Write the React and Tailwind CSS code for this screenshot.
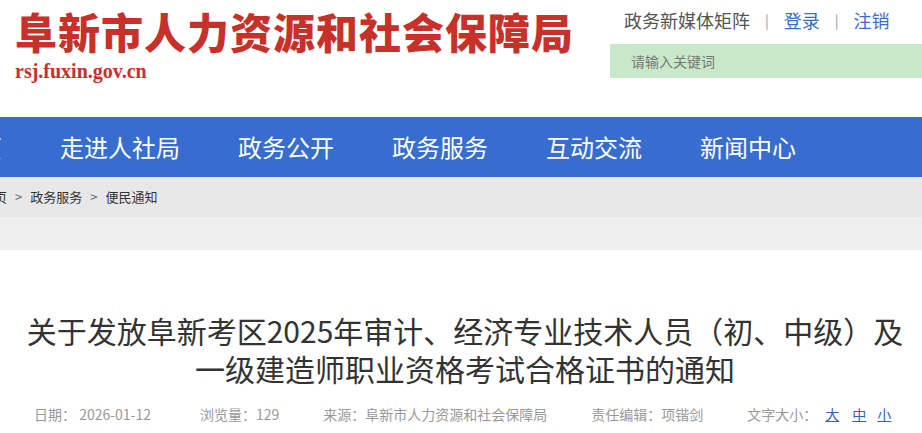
import React from 'react'

const cjk = { fontFamily: '"Noto Sans CJK SC", "Noto Sans", sans-serif' }

const navItems = ['首页', '走进人社局', '政务公开', '政务服务', '互动交流', '新闻中心']

const Header = () => (
  <header className="h-[117px] bg-white flex justify-between">
    <div className="pl-[15px] pt-[5px]">
      <h1 className="text-[42px] leading-[52px] font-black text-[#c7312a] tracking-[1px]" style={cjk}>
        阜新市人力资源和社会保障局
      </h1>
      <p className="text-[20px] leading-[22px] font-bold text-[#c7312a] mt-[3px]" style={{ fontFamily: '"Liberation Serif", serif' }}>
        rsj.fuxin.gov.cn
      </p>
    </div>
    <div className="w-[312px] pt-[8px]">
      <div className="flex items-center text-[18px] leading-[24px] pl-[14px]" style={cjk}>
        <span className="text-[#555]">政务新媒体矩阵</span>
        <span className="text-[#999] text-[14px] mx-[15px]">|</span>
        <a className="text-[#3d6cc4]">登录</a>
        <span className="text-[#999] text-[14px] mx-[15px]">|</span>
        <a className="text-[#3d6cc4]">注销</a>
      </div>
      <div className="mt-[12px] h-[34px] bg-[#c8e9c9] flex items-center pl-[21px]">
        <span className="text-[14px] text-[#777]" style={cjk}>请输入关键词</span>
      </div>
    </div>
  </header>
)

const Nav = () => (
  <nav className="h-[60px] bg-[#366dcf] overflow-hidden">
    <ul className="flex items-center h-full gap-[58px] -ml-[46px]" style={cjk}>
      {navItems.map((item) => (
        <li key={item} className="text-[24px] text-white whitespace-nowrap leading-[60px]">{item}</li>
      ))}
    </ul>
  </nav>
)

const Breadcrumb = () => (
  <div className="h-[40px] bg-[#e8e8e8] overflow-hidden flex items-center">
    <div className="flex items-center -ml-[19px] text-[13px] text-[#333] gap-[8px] whitespace-nowrap" style={cjk}>
      <span>首页</span>
      <span className="text-[#666]">&gt;</span>
      <span>政务服务</span>
      <span className="text-[#666]">&gt;</span>
      <span>便民通知</span>
    </div>
  </div>
)

const Meta = () => (
  <div className="flex items-center gap-[44px] pl-[34px] text-[14px] leading-[20px] text-[#999] whitespace-nowrap" style={cjk}>
    <span className="mr-[5px]">日期： 2026-01-12</span>
    <span>浏览量：129</span>
    <span>来源：阜新市人力资源和社会保障局</span>
    <span>责任编辑：项锴剑</span>
    <span className="flex items-center">
      文字大小：
      <a className="ml-[8px] text-[#3360bf] underline">大</a>
      <a className="ml-[13px] text-[#3360bf] underline">中</a>
      <a className="ml-[11px] text-[#3360bf] underline">小</a>
    </span>
  </div>
)

export default function App() {
  return (
    <div className="w-[922px] h-[433px] bg-white overflow-hidden">
      <Header />
      <Nav />
      <Breadcrumb />
      <div className="h-[33px] bg-[#efefef]" />
      <article className="pt-[61px]">
        <h2 className="text-[30px] leading-[38px] text-[#333] text-center pl-[8px]" style={cjk}>
          关于发放阜新考区2025年审计、经济专业技术人员（初、中级）及<br />
          一级建造师职业资格考试合格证书的通知
        </h2>
        <div className="mt-[17px]">
          <Meta />
        </div>
      </article>
    </div>
  )
}
